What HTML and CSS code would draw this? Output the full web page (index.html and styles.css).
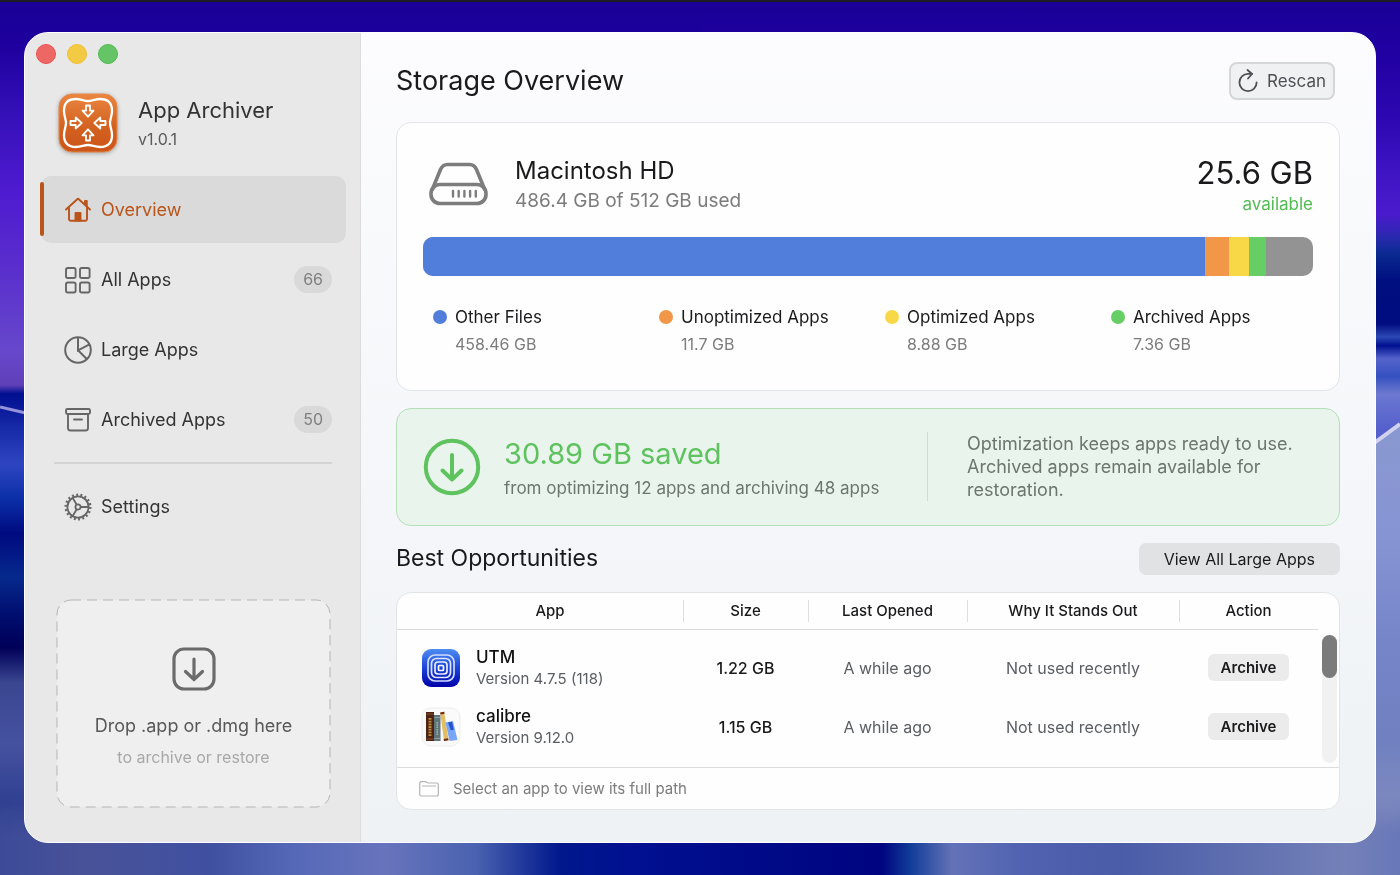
FILE: index.html
```
<!DOCTYPE html>
<html lang="en">
<head>
	<meta charset="UTF-8">
	<title>App Archiver</title>
	<link rel="stylesheet" href="styles.css">
</head>
<body>
<svg class="wallpaper" viewBox="0 0 1400 875" preserveAspectRatio="none" aria-hidden="true">
	<defs>
		<linearGradient id="wallLeft" x1="0" y1="0" x2="0" y2="1">
			<stop offset="0" stop-color="#1a0096"/>
			<stop offset=".05" stop-color="#1e009e"/>
			<stop offset=".13" stop-color="#3510b8"/>
			<stop offset=".22" stop-color="#4f1bd0"/>
			<stop offset=".31" stop-color="#5a2fcc"/>
			<stop offset=".4" stop-color="#6748cc"/>
			<stop offset=".44" stop-color="#6040b8"/>
			<stop offset=".45" stop-color="#000f90"/>
			<stop offset=".53" stop-color="#2e45c0"/>
			<stop offset=".57" stop-color="#0b2fa8"/>
			<stop offset=".61" stop-color="#000a80"/>
			<stop offset=".66" stop-color="#06298c"/>
			<stop offset=".7" stop-color="#000f70"/>
			<stop offset=".74" stop-color="#000058"/>
			<stop offset=".78" stop-color="#3a4690"/>
			<stop offset=".85" stop-color="#4552a0"/>
			<stop offset=".92" stop-color="#2f3f90"/>
			<stop offset="1" stop-color="#3c4a98"/>
		</linearGradient>
		<linearGradient id="wallRight" x1="0" y1="0" x2="0" y2="1">
			<stop offset="0" stop-color="#1a0096"/>
			<stop offset=".05" stop-color="#1f00a0"/>
			<stop offset=".13" stop-color="#2c06b0"/>
			<stop offset=".2" stop-color="#4015c4"/>
			<stop offset=".245" stop-color="#4a1bcc"/>
			<stop offset=".27" stop-color="#2b28b0"/>
			<stop offset=".29" stop-color="#0a2a90"/>
			<stop offset=".32" stop-color="#000f80"/>
			<stop offset=".37" stop-color="#000c80"/>
			<stop offset=".385" stop-color="#2c48b4"/>
			<stop offset=".395" stop-color="#001090"/>
			<stop offset=".41" stop-color="#5564cc"/>
			<stop offset=".43" stop-color="#3550c0"/>
			<stop offset=".45" stop-color="#6c78d0"/>
			<stop offset=".49" stop-color="#5560cc"/>
		</linearGradient>
		<linearGradient id="wallRightLow" x1="0" y1="0" x2="0" y2="1">
			<stop offset="0" stop-color="#8a98d0"/>
			<stop offset=".25" stop-color="#8794d4"/>
			<stop offset=".48" stop-color="#7585c8"/>
			<stop offset=".7" stop-color="#7080c0"/>
			<stop offset=".86" stop-color="#7f8abf"/>
			<stop offset="1" stop-color="#6878b8"/>
		</linearGradient>
		<linearGradient id="wallBottom" x1="0" y1="0" x2="1" y2="0">
			<stop offset="0" stop-color="#3c4a98"/>
			<stop offset=".06" stop-color="#485298"/>
			<stop offset=".15" stop-color="#4050a0"/>
			<stop offset=".21" stop-color="#5568b8"/>
			<stop offset=".275" stop-color="#6874bc"/>
			<stop offset=".34" stop-color="#4a62b0"/>
			<stop offset=".4" stop-color="#00188c"/>
			<stop offset=".45" stop-color="#001090"/>
			<stop offset=".63" stop-color="#000480"/>
			<stop offset=".65" stop-color="#103c98"/>
			<stop offset=".68" stop-color="#6472b8"/>
			<stop offset=".73" stop-color="#5062b0"/>
			<stop offset=".8" stop-color="#4a5ca8"/>
			<stop offset=".89" stop-color="#6070b0"/>
			<stop offset=".96" stop-color="#7480b8"/>
			<stop offset="1" stop-color="#6878b8"/>
		</linearGradient>
		<linearGradient id="fade" x1="0" y1="0" x2="0" y2="1">
			<stop offset="0" stop-color="#000"/>
			<stop offset=".5" stop-color="#fff"/>
		</linearGradient>
		<mask id="bottomMask">
			<rect y="795" width="1400" height="80" fill="url(#fade)"/>
		</mask>
	</defs>
	<rect width="700" height="875" fill="url(#wallLeft)"/>
	<rect x="700" width="700" height="875" fill="url(#wallRight)"/>
	<path d="M0 407L30 414" stroke="#9492da" stroke-width="3"/>
	<path d="M1340 468L1400 424V875H1340z" fill="url(#wallRightLow)"/>
	<path d="M1340 468L1400 424" stroke="#d0d2f0" stroke-width="4"/>
	<rect y="795" width="1400" height="80" fill="url(#wallBottom)" mask="url(#bottomMask)"/>
	<rect width="1400" height="2" fill="#1d1c22"/>
</svg>

<div class="window">
	<aside class="sidebar">
		<div class="lights">
			<span class="light red"></span>
			<span class="light yellow"></span>
			<span class="light green"></span>
		</div>
		<div class="brand">
			<svg class="brand-icon" width="60" height="60" viewBox="0 0 60 60" fill="none">
				<defs>
					<linearGradient id="brandFill" x1="0" y1="0" x2="0" y2="1">
						<stop offset="0" stop-color="#ea8540"/>
						<stop offset=".6" stop-color="#d2601f"/>
						<stop offset="1" stop-color="#cb5418"/>
					</linearGradient>
				</defs>
				<rect x="1" y="1" width="58" height="58" rx="13" fill="url(#brandFill)" stroke="#e58a4c"/>
				<path d="M30 8C26 8 23 6 18 6C10 6 6 10 6 18C6 23 8 26 8 30C8 34 6 37 6 42C6 50 10 54 18 54C23 54 26 52 30 52C34 52 37 54 42 54C50 54 54 50 54 42C54 37 52 34 52 30C52 26 54 23 54 18C54 10 50 6 42 6C37 6 34 8 30 8Z" stroke="#fff" stroke-width="2.3"/>
				<g stroke="#fff" stroke-width="1.8" stroke-linejoin="round">
					<path id="arrow" d="M28 12.5h4v5.2h3.5L30 23.7l-5.5-6H28z"/>
					<use href="#arrow" transform="rotate(90 30 30)"/>
					<use href="#arrow" transform="rotate(180 30 30)"/>
					<use href="#arrow" transform="rotate(270 30 30)"/>
				</g>
			</svg>
			<div>
				<div class="brand-name">App Archiver</div>
				<div class="brand-version">v1.0.1</div>
			</div>
		</div>
		<nav class="nav">
			<a href="#overview" class="nav-item active">
				<svg width="28" height="28" viewBox="0 0 28 28" fill="none" stroke="currentColor" stroke-width="1.9" stroke-linecap="round" stroke-linejoin="round">
					<path d="M2 13.5L13.2 3.2a1.2 1.2 0 0 1 1.600 0L26 13.5"/>
					<path d="M5 11.5v11.5a1.8 1.8 0 0 0 1.8 1.8h14.4a1.8 1.8 0 0 0 1.8-1.8V11.500"/>
					<path d="M21 8V5h1.800v4.600"/>
					<path d="M11.500 24.500v-7.500h5v7.500z" fill="currentColor"/>
				</svg>
				<span>Overview</span>
			</a>
			<a href="#all" class="nav-item">
				<svg width="28" height="28" viewBox="0 0 28 28" fill="none" stroke="currentColor" stroke-width="1.9">
					<rect x="2" y="2" width="9.6" height="10" rx="1.8"/>
					<rect x="16" y="2" width="9.6" height="10" rx="1.8"/>
					<rect x="2" y="16.5" width="9.6" height="10" rx="1.8"/>
					<rect x="16" y="16.5" width="9.6" height="10" rx="1.8"/>
				</svg>
				<span>All Apps</span>
				<span class="count">66</span>
			</a>
			<a href="#large" class="nav-item">
				<svg width="28" height="28" viewBox="0 0 28 28" fill="none" stroke="currentColor" stroke-width="2">
					<circle cx="14" cy="14" r="12.8"/>
					<path d="M14 1.2V14.300L25.500 8.300M14 14.300l9 9"/>
				</svg>
				<span>Large Apps</span>
			</a>
			<a href="#archived" class="nav-item">
				<svg width="28" height="28" viewBox="0 0 28 28" fill="none" stroke="currentColor" stroke-width="1.9" stroke-linecap="round">
					<rect x="2" y="3" width="24" height="5" rx="1.5"/>
					<path d="M4 8.5v13.5a2.5 2.5 0 0 0 2.5 2.5h15a2.5 2.5 0 0 0 2.5-2.5V8.5M10 13.5h8"/>
				</svg>
				<span>Archived Apps</span>
				<span class="count">50</span>
			</a>
			<hr class="nav-line">
			<a href="#settings" class="nav-item">
				<svg width="28" height="28" viewBox="0 0 28 28" fill="none" stroke="currentColor" stroke-width="1.8">
					<circle cx="14" cy="14" r="10.6"/>
					<circle cx="14" cy="14" r="12.3" stroke-width="2.4" stroke-dasharray="1.9 2.39"/>
					<circle cx="14" cy="14" r="2.6"/>
					<path d="M16.6 14h8M12.7 11.7L8.6 4.8M12.7 16.3l-4.1 6.9"/>
				</svg>
				<span>Settings</span>
			</a>
		</nav>
		<div class="dropzone">
			<svg class="dropzone-outline" aria-hidden="true">
				<rect width="100%" height="100%" rx="14"/>
			</svg>
			<svg width="44" height="44" viewBox="0 0 44 44" fill="none" stroke="#6b6b6b" stroke-width="3.2" stroke-linecap="round" stroke-linejoin="round">
				<rect x="2" y="2" width="40" height="40" rx="10"/>
				<path d="M22 12v20M13.5 24.5L22 32.5l8.5-8"/>
			</svg>
			<div class="dropzone-title">Drop .app or .dmg here</div>
			<div class="dropzone-hint">to archive or restore</div>
		</div>
	</aside>

	<main class="main">
		<header class="page-head">
			<h1>Storage Overview</h1>
			<button type="button" class="rescan">
				<svg width="20" height="24" viewBox="0 0 20 24" fill="none" stroke="currentColor" stroke-width="1.8" stroke-linecap="round" stroke-linejoin="round">
					<path d="M18.600 13.500a8.600 8.600 0 1 1-8.600-8.600h4"/>
					<path d="M9.500 1L14 5 10 9.500"/>
				</svg>
				Rescan
			</button>
		</header>

		<section class="card disk">
			<div class="disk-head">
				<svg width="60" height="44" viewBox="0 0 60 44" fill="none" stroke="#7d7d7d" stroke-width="3.6" stroke-linecap="round" stroke-linejoin="round">
					<rect x="3" y="22.5" width="55" height="19" rx="9"/>
					<path d="M4.5 27L12.5 7.5C14 4 16 2.500 19.500 2.500h22C45 2.500 47 4 48.500 7.500L56.500 27"/>
					<path d="M25 29v5.500M30.700 29v5.500M36.400 29v5.500M42.100 29v5.500M47.800 29v5.500" stroke-width="2.4"/>
				</svg>
				<div class="disk-name">
					<h2>Macintosh HD</h2>
					<p>486.4 GB of 512 GB used</p>
				</div>
				<div class="disk-free">
					<strong>25.6 GB</strong>
					<span>available</span>
				</div>
			</div>
			<div class="bar">
				<span class="blue" style="width: 87.9%"></span>
				<span class="orange" style="width: 2.7%"></span>
				<span class="gold" style="width: 2.2%"></span>
				<span class="lime" style="width: 1.9%"></span>
			</div>
			<ul class="legend">
				<li><i class="dot blue"></i><b>Other Files</b><span>458.46 GB</span></li>
				<li><i class="dot orange"></i><b>Unoptimized Apps</b><span>11.7 GB</span></li>
				<li><i class="dot gold"></i><b>Optimized Apps</b><span>8.88 GB</span></li>
				<li><i class="dot lime"></i><b>Archived Apps</b><span>7.36 GB</span></li>
			</ul>
		</section>

		<section class="card saved">
			<svg width="58" height="58" viewBox="0 0 58 58" fill="none" stroke="#5ec25f" stroke-width="4" stroke-linecap="round" stroke-linejoin="round">
				<circle cx="29" cy="29" r="26.2"/>
				<path d="M29 17v24M19.5 32.5L29 41.5l9.5-9"/>
			</svg>
			<div class="saved-text">
				<strong>30.89 GB saved</strong>
				<span>from optimizing 12 apps and archiving 48 apps</span>
			</div>
			<p class="saved-note">Optimization keeps apps ready to use. Archived apps remain available for restoration.</p>
		</section>

		<div class="section-head">
			<h2>Best Opportunities</h2>
			<button type="button" class="view-all">View All Large Apps</button>
		</div>

		<section class="card list">
			<div class="list-body">
				<table>
					<colgroup>
						<col>
						<col class="col-size">
						<col class="col-opened">
						<col class="col-why">
						<col class="col-action">
					</colgroup>
					<thead>
						<tr>
							<th>App</th>
							<th>Size</th>
							<th>Last Opened</th>
							<th>Why It Stands Out</th>
							<th>Action</th>
						</tr>
					</thead>
					<tbody>
						<tr>
							<td>
								<div class="app">
									<svg width="40" height="40" viewBox="0 0 40 40" fill="none">
										<defs>
											<linearGradient id="utmFill" x1="0" y1="0" x2="0" y2="1">
												<stop offset="0" stop-color="#4f8df0"/>
												<stop offset=".5" stop-color="#1c44d8"/>
												<stop offset="1" stop-color="#0000a8"/>
											</linearGradient>
										</defs>
										<rect x="1" y="1" width="38" height="38" rx="9" fill="url(#utmFill)"/>
										<rect x="7" y="7" width="26" height="26" rx="7" stroke="#cfdcff" stroke-width="1.7"/>
										<rect x="10.5" y="10.5" width="19" height="19" rx="5" stroke="#dde6ff" stroke-width="1.7"/>
										<rect x="14" y="14" width="12" height="12" rx="3" stroke="#e8eeff" stroke-width="1.7"/>
										<rect x="17.5" y="17.5" width="5" height="5" rx="1" stroke="#fff" stroke-width="1.7"/>
									</svg>
									<div>
										<div class="app-name">UTM</div>
										<div class="app-version">Version 4.7.5 (118)</div>
									</div>
								</div>
							</td>
							<td class="size">1.22 GB</td>
							<td>A while ago</td>
							<td>Not used recently</td>
							<td><button type="button" class="archive">Archive</button></td>
						</tr>
						<tr>
							<td>
								<div class="app">
									<svg width="40" height="40" viewBox="0 0 40 40" fill="none">
										<rect x="1" y="1" width="38" height="38" rx="9" fill="#fafafa" stroke="#ececec"/>
										<rect x="5" y="5" width="8" height="29" fill="#4b2415"/>
										<path d="M5.5 7h7M5.5 32h7" stroke="#93502a"/>
										<path d="M9 11v18" stroke="#c08a3c" stroke-width="3" stroke-dasharray="1.8 .9"/>
										<rect x="13" y="8" width="6.5" height="26" fill="#5f7478"/>
										<path d="M13.5 10.5h6M13.5 31.5h6" stroke="#8ea2a3"/>
										<path d="M16.3 15v13" stroke="#a3b4b4" stroke-width="1.5" stroke-dasharray="1.5 .8"/>
										<path d="M19.2 5.5l4-.8 4.3 28.5-4.5.8z" fill="#e2bd61"/>
										<path d="M19.2 5.5l4-.8.3 2-4 .8zM22.6 32l4.6-.8.3 2-4.5.8z" fill="#6d2618"/>
										<path d="M24.5 15.5l7.5-1.500 4.500 19-8 1z" fill="#79a6f6"/>
										<path d="M27 15.500l4-.8 1.800 8-3 .6z" fill="#2451cf"/>
									</svg>
									<div>
										<div class="app-name">calibre</div>
										<div class="app-version">Version 9.12.0</div>
									</div>
								</div>
							</td>
							<td class="size">1.15 GB</td>
							<td>A while ago</td>
							<td>Not used recently</td>
							<td><button type="button" class="archive">Archive</button></td>
						</tr>
					</tbody>
				</table>
				<div class="scrollbar"><span></span></div>
			</div>
			<footer class="list-foot">
				<svg width="20" height="16" viewBox="0 0 20 16" fill="none" stroke="#b4b4b4" stroke-width="1.2" stroke-linejoin="round">
					<path d="M.7 13V2.500A1.800 1.800 0 0 1 2.500.7h3.700c1.300 0 1.600 1.300 3 1.300h8.300a1.800 1.800 0 0 1 1.800 1.800v9.400a1.800 1.800 0 0 1-1.800 1.800h-15A1.800 1.800 0 0 1 .7 13z"/>
					<path d="M3 5h14"/>
				</svg>
				Select an app to view its full path
			</footer>
		</section>
	</main>
</div>
</body>
</html>
```
FILE: styles.css
```
* {
	box-sizing: border-box;
}
body {
	background: #1a0096;
	color: #1a1a1c;
	font: 18px/24px Inter, "Liberation Sans", sans-serif;
	margin: 0;
	min-height: 100vh;
	padding: 32px 24px;
}
h1, h2, p, ul {
	font-weight: normal;
	margin: 0;
	padding: 0;
}
button {
	border: 0;
	color: inherit;
	cursor: pointer;
	font-family: inherit;
	padding: 0;
}
svg {
	display: block;
	flex: none;
}
.wallpaper {
	position: fixed;
	top: 0;
	left: 0;
	width: 100%;
	height: 100%;
	z-index: -1;
}

.window {
	background: linear-gradient(#fcfcfe, #f4f6f9 60%, #eef2f5);
	border: 1px solid #fff;
	border-radius: 24px;
	display: flex;
	overflow: hidden;
}

/* sidebar */
.sidebar {
	background: #e8e8e8;
	border-right: 1px solid #dcdcdd;
	display: flex;
	flex: none;
	flex-direction: column;
	padding: 11px 14px 35px 16px;
	width: 336px;
}
.lights {
	display: flex;
	gap: 11px;
	margin-left: -5px;
}
.light {
	border: 1px solid;
	border-radius: 50%;
	height: 20px;
	width: 20px;
}
.light.red {
	background: #ed6765;
	border-color: #ec4f50;
}
.light.yellow {
	background: #f2ca44;
	border-color: #f0bf2c;
}
.light.green {
	background: #65c466;
	border-color: #4cbb4e;
}
.brand {
	align-items: center;
	display: flex;
	gap: 20px;
	margin: 29px 0 23px 17px;
}
.brand-icon {
	filter: drop-shadow(0 1px 2px rgba(0,0,0,0.3));
}
.brand-name {
	color: #333;
	font-size: 22px;
	line-height: 32px;
}
.brand-version {
	color: #5a5a5a;
	font-size: 16px;
	line-height: 26px;
}
.nav {
	display: flex;
	flex-direction: column;
	gap: 3px;
}
.nav-item {
	align-items: center;
	border-radius: 10px;
	color: #333;
	display: flex;
	font-size: 18px;
	gap: 9px;
	height: 67px;
	padding: 0 14px 0 23px;
	position: relative;
	text-decoration: none;
}
.nav-item svg {
	color: #666;
}
.nav-item.active {
	background: #dadada;
}
.nav-item.active, .nav-item.active svg {
	color: #b9541a;
}
.nav-item.active:before {
	background: #b9541a;
	border-radius: 2px;
	content: "";
	height: 54px;
	left: -1px;
	position: absolute;
	top: 6px;
	width: 4px;
}
.count {
	background: #d9d9d9;
	border-radius: 14px;
	color: #808080;
	font-size: 16px;
	line-height: 27px;
	margin-left: auto;
	padding: 0 9px;
}
.nav-line {
	border: 0;
	border-top: 2px solid #d3d3d3;
	margin: 6px 14px 6px 13px;
}
.dropzone {
	align-items: center;
	background: #efefef;
	border-radius: 14px;
	display: flex;
	flex-direction: column;
	margin: auto 16px 0;
	padding: 47px 0 35px;
	position: relative;
}
.dropzone-outline {
	height: 100%;
	left: 0;
	overflow: visible;
	position: absolute;
	top: 0;
	width: 100%;
}
.dropzone-outline rect {
	fill: none;
	stroke: #b5b5b5;
	stroke-dasharray: 10 6;
	stroke-width: 1px;
}
.dropzone-title {
	color: #585858;
	font-size: 18px;
	line-height: 32px;
	margin-top: 19px;
}
.dropzone-hint {
	color: #a8a8a8;
	font-size: 16px;
	line-height: 30px;
}

/* main column */
.main {
	display: flex;
	flex: 1;
	flex-direction: column;
	gap: 17px;
	min-width: 0;
	padding: 29px 35px 32px;
}
.page-head, .section-head {
	display: flex;
	justify-content: space-between;
}
.page-head {
	align-items: center;
	margin-bottom: 5px;
	padding-right: 5px;
}
h1 {
	font-size: 27px;
	line-height: 36px;
}
.rescan {
	align-items: center;
	background: #f0f1f3;
	border: 2px solid #d5d6d8;
	border-radius: 8px;
	color: #4d5054;
	display: flex;
	font-size: 17px;
	gap: 9px;
	height: 38px;
	padding: 0 7px;
}
.card {
	background: #fefefe;
	border: 1px solid #e3e4e6;
	border-radius: 15px;
}

.disk {
	padding: 32px 26px;
}
.disk-head {
	align-items: flex-start;
	display: flex;
	padding-left: 5px;
}
.disk-head svg {
	margin-top: 7px;
}
.disk-name {
	flex: 1;
	margin-left: 27px;
}
.disk-name h2 {
	font-size: 24px;
	line-height: 32px;
}
.disk-name p {
	color: #7c7c7c;
	font-size: 19px;
	line-height: 28px;
}
.disk-free {
	text-align: right;
}
.disk-free strong {
	display: block;
	font-size: 31px;
	font-weight: normal;
	line-height: 36px;
}
.disk-free span {
	color: #52bb53;
	display: block;
	font-size: 17px;
	line-height: 26px;
}
.bar {
	background: #939393;
	border-radius: 10px;
	display: flex;
	height: 39px;
	margin: 20px 0 28px;
	overflow: hidden;
}
.blue {
	background: #527edb;
}
.orange {
	background: #f19747;
}
.gold {
	background: #f9d848;
}
.lime {
	background: #66ce65;
}
.legend {
	display: grid;
	gap: 24px;
	grid-template-columns: repeat(4, 1fr);
	list-style: none;
	padding-left: 10px;
}
.legend li {
	align-items: center;
	column-gap: 8px;
	display: grid;
	grid-template-columns: 14px 1fr;
}
.dot {
	border-radius: 50%;
	height: 14px;
}
.legend b {
	font-weight: normal;
	font-size: 17px;
	line-height: 26px;
}
.legend span {
	color: #7c7c7c;
	font-size: 16px;
	grid-column: 2;
	line-height: 28px;
}

.saved {
	align-items: center;
	background: #e9f5ec;
	border-color: #b5dfb8;
	display: flex;
	padding: 23px 26px 24px;
}
.saved-text {
	flex: 1;
	margin-left: 23px;
}
.saved-text strong {
	color: #5ec25f;
	display: block;
	font-size: 29px;
	font-weight: normal;
	line-height: 42px;
}
.saved-text span {
	color: #6c756e;
	display: block;
	font-size: 17px;
	line-height: 26px;
}
.saved-note {
	border-left: 1px solid #cfdcd2;
	color: #6c756e;
	font-size: 18px;
	line-height: 23px;
	padding-left: 39px;
	width: 386px;
}

.section-head h2 {
	font-size: 23px;
	line-height: 30px;
}
.view-all {
	background: #e1e2e4;
	border-radius: 7px;
	font-size: 16px;
	line-height: 32px;
	padding: 0 25px;
}

.list {
	overflow: hidden;
}
.list-body {
	display: flex;
	padding-bottom: 11px;
}
table {
	border-collapse: separate;
	border-spacing: 0;
	flex: 1;
	table-layout: fixed;
	width: 100%;
}
.col-size {
	width: 125px;
}
.col-opened {
	width: 159px;
}
.col-why {
	width: 212px;
}
.col-action {
	width: 139px;
}
th {
	border-bottom: 1px solid #dcdcde;
	font-size: 15px;
	font-weight: 500;
	height: 37px;
	line-height: 22px;
	padding: 0;
}
th + th {
	background: linear-gradient(#dedee0, #dedee0) 0 50% / 1px 22px no-repeat;
}
th:first-child {
	padding-left: 20px;
}
/* gap between the head and the first row */
tbody:before {
	content: "";
	display: table-row;
	height: 8px;
}
td {
	color: #5a5d61;
	font-size: 16px;
	height: 59px;
	padding: 0;
	text-align: center;
}
td.size {
	color: #1a1a1c;
	font-weight: 500;
}
.app {
	align-items: center;
	display: flex;
	gap: 15px;
	padding-left: 24px;
	text-align: left;
}
.app-name {
	color: #111;
	font-size: 17px;
	font-weight: 500;
	line-height: 22px;
}
.app-version {
	font-size: 15px;
	line-height: 22px;
}
.archive {
	background: #ebebec;
	border-radius: 6px;
	color: #1a1a1c;
	font-size: 15px;
	font-weight: 600;
	line-height: 27px;
	padding: 0 13px;
}
.scrollbar {
	background: #f1f1f1;
	border-radius: 8px;
	margin: 42px 2px -7px 4px;
	width: 15px;
}
.scrollbar span {
	background: #7b7b7b;
	border-radius: 8px;
	display: block;
	height: 43px;
}
.list-foot {
	align-items: center;
	border-top: 1px solid #dcdcde;
	color: #7c7c7c;
	display: flex;
	font-size: 15px;
	gap: 14px;
	height: 42px;
	padding-left: 22px;
}
```
